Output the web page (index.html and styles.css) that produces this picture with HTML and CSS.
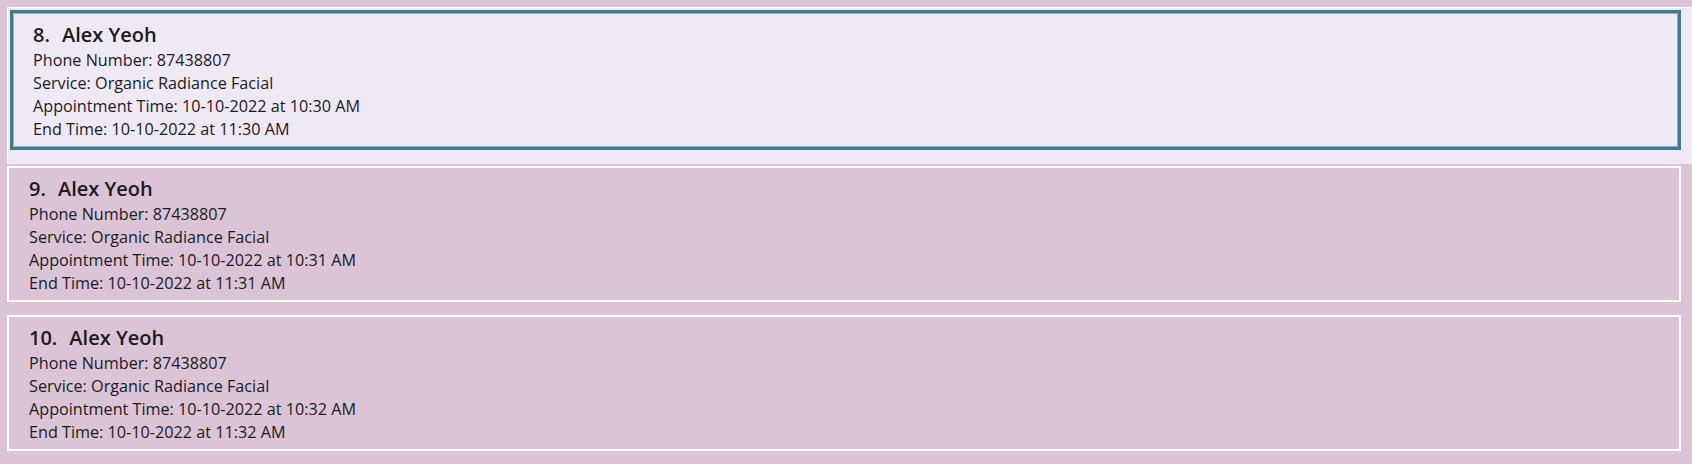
FILE: index.html
```html
<!DOCTYPE html>
<html>
<head>
<meta charset="utf-8">
<link rel="stylesheet" href="styles.css">
</head>
<body>
<div class="list">
  <div class="cell selected">
    <div class="card">
      <div class="title"><span class="idx">8.</span><span class="name">Alex Yeoh</span></div>
      <div class="line">Phone Number: 87438807</div>
      <div class="line">Service: Organic Radiance Facial</div>
      <div class="line">Appointment Time: 10-10-2022 at 10:30 AM</div>
      <div class="line">End Time: 10-10-2022 at 11:30 AM</div>
    </div>
  </div>
  <div class="cell">
    <div class="card">
      <div class="title"><span class="idx">9.</span><span class="name">Alex Yeoh</span></div>
      <div class="line">Phone Number: 87438807</div>
      <div class="line">Service: Organic Radiance Facial</div>
      <div class="line">Appointment Time: 10-10-2022 at 10:31 AM</div>
      <div class="line">End Time: 10-10-2022 at 11:31 AM</div>
    </div>
  </div>
  <div class="cell">
    <div class="card">
      <div class="title"><span class="idx">10.</span><span class="name">Alex Yeoh</span></div>
      <div class="line">Phone Number: 87438807</div>
      <div class="line">Service: Organic Radiance Facial</div>
      <div class="line">Appointment Time: 10-10-2022 at 10:32 AM</div>
      <div class="line">End Time: 10-10-2022 at 11:32 AM</div>
    </div>
  </div>
</div>
</body>
</html>
```
FILE: styles.css
```css
html, body {
  margin: 0;
  padding: 0;
}
body {
  width: 1692px;
  height: 464px;
  overflow: hidden;
  background: #dac4d6;
  font-family: "Open Sans", "Noto Sans", sans-serif;
  color: #1c1a1f;
}
.list {
  padding: 7px 0 0 7px;
}
.cell {
  padding: 2px 11px 11px 0;
}
.cell.selected {
  background: #efe9f5;
  border-top: 1px solid #ffffff;
  border-left: 1px solid #ffffff;
  padding: 2px 11px 14px 2px;
}
.card {
  border: 2px solid #ffffff;
  height: 132px;
  padding: 0 0 0 20px;
  box-sizing: content-box;
}
.cell.selected .card {
  border: 3px solid #3e7b90;
  box-shadow: inset 0 0 0 1px #8fb4c3;
  padding: 1px 0 1px 20px;
}
.title {
  display: flex;
  gap: 12px;
  font-size: 20px;
  font-weight: 600;
  line-height: 26px;
  padding-top: 8px;
  margin-bottom: 1px;
}
.line {
  font-size: 16.2px;
  line-height: 23px;
}
```
